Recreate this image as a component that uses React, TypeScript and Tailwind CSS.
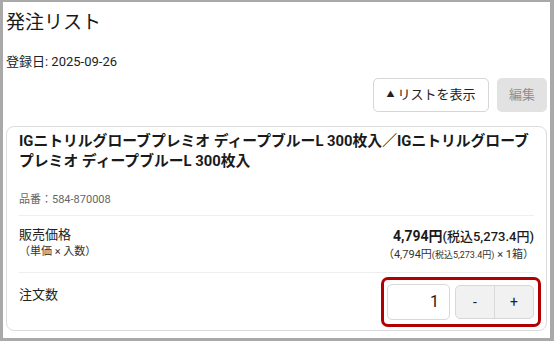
import React from "react";

export default function App() {
  return (
    <div className="w-[554px] h-[341px] overflow-hidden bg-[#a9a9a9] pt-[2px] pl-[3px] pr-[4px] pb-[3px] font-[Roboto,'Noto_Sans_CJK_JP',sans-serif] text-[#222]">
      <div className="h-full w-full bg-white pl-[3px] pr-[3px] overflow-hidden">
        <div className="pt-[7px] text-[19px] leading-[28px] text-[#1a1a1a]">発注リスト</div>
        <div className="mt-[16px] text-[13px] leading-[18px] text-[#222]">登録日: 2025-09-26</div>
        <div className="mt-[7px] flex justify-end gap-[8px]">
          <button className="h-[34px] w-[116px] rounded-[5px] border border-[#d6d6d6] bg-white text-[13px] text-[#222] flex items-center justify-center gap-[3px]">
            <span className="text-[8px] leading-none">▲</span>
            <span>リストを表示</span>
          </button>
          <button className="h-[34px] w-[50px] rounded-[5px] bg-[#e2e2e2] text-[13px] text-[#8f8f8f]">編集</button>
        </div>
        <div className="mt-[14px] rounded-[8px] border border-[#dcdcdc] px-[12px]">
          <div className="pt-[5px] text-[14.8px] leading-[19.5px] font-bold text-[#1a1a1a]">
            IGニトリルグローブプレミオ ディープブルーL 300枚入／IGニトリルグローブプレミオ ディープブルーL 300枚入
          </div>
          <div className="mt-[21px] text-[11px] leading-[16px] text-[#666]">品番：584-870008</div>
          <div className="mt-[7px] h-px bg-[#eeeeee]" />
          <div className="flex justify-between pt-[10px] pb-[9px]">
            <div>
              <div className="text-[13px] leading-[18px] text-[#222]">販売価格</div>
              <div className="text-[11px] leading-[16px] text-[#333]">（単価 × 入数）</div>
            </div>
            <div className="flex flex-col items-end">
              <div className="leading-[20px] text-[#1a1a1a] whitespace-nowrap">
                <span className="text-[14px] font-bold">4,794円</span>
                <span className="text-[13px] font-medium">(税込5,273.4円)</span>
              </div>
              <div className="text-[11px] leading-[16px] text-[#333] whitespace-nowrap">
                （4,794円<span className="text-[9px]">(税込5,273.4円)</span> × 1箱）
              </div>
            </div>
          </div>
          <div className="h-px bg-[#eeeeee]" />
          <div className="flex justify-between items-start pt-[11px] pb-[10px]">
            <div className="mt-[2px] text-[13px] leading-[18px] text-[#222]">注文数</div>
            <div className="relative flex items-center gap-[5px]">
              <div className="absolute -left-[6px] -right-[7px] -top-[7px] -bottom-[7px] rounded-[7px] border-[3px] border-[#b10000]" />
              <div className="h-[36px] w-[63px] rounded-[5px] border border-[#d8d8d8] bg-white flex items-center justify-end pr-[10px] text-[16px] text-[#1a1a1a]">
                1
              </div>
              <div className="flex h-[34px] w-[79px] rounded-[5px] border border-[#d8d8d8] bg-[#f1f1f1] overflow-hidden">
                <div className="flex-1 flex items-center justify-center text-[14px] text-[#222]">-</div>
                <div className="w-px bg-[#d8d8d8]" />
                <div className="flex-1 flex items-center justify-center text-[14px] text-[#222]">+</div>
              </div>
            </div>
          </div>
        </div>
      </div>
    </div>
  );
}
